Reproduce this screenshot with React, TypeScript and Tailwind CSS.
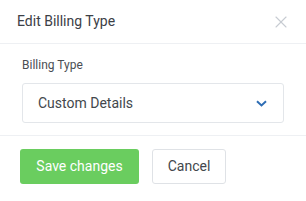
import { X } from 'lucide-react';

const App = () => {
  return (
    <div className="w-[306px] h-[201px] bg-white font-['Roboto',sans-serif]">
      <div className="flex items-center justify-between h-[44px] pl-[17px] pr-[15px] border-b border-[#eef0f3]">
        <h2 className="text-[14px] text-[#3c4046]">Edit Billing Type</h2>
        <X className="w-[20px] h-[20px] text-[#c7cbd2]" strokeWidth={1.3} />
      </div>

      <div className="px-[22px] pt-[13px] pb-[12px] border-b border-[#eef0f3]">
        <label className="block text-[12px] text-[#4a4e54] leading-[16px]">Billing Type</label>
        <button className="mt-[10px] w-full h-[40px] flex items-center justify-between pl-[15px] pr-[16px] border border-[#e3e6ea] rounded-[3px]">
          <span className="text-[14px] text-[#43474c]">Custom Details</span>
          <svg width="11" height="7" viewBox="0 0 11 7" fill="none">
            <path d="M1 1.2 5.5 5.4 10 1.2" stroke="#2e6db4" strokeWidth="2" />
          </svg>
        </button>
      </div>

      <div className="flex gap-[13px] px-[20px] pt-[13px]">
        <button className="h-[35px] w-[119px] rounded-[3px] bg-[#6acd5f] text-white text-[14px]">Save changes</button>
        <button className="h-[35px] w-[74px] rounded-[3px] border border-[#dfe2e6] text-[#43474c] text-[14px]">Cancel</button>
      </div>
    </div>
  );
};

export default App;
